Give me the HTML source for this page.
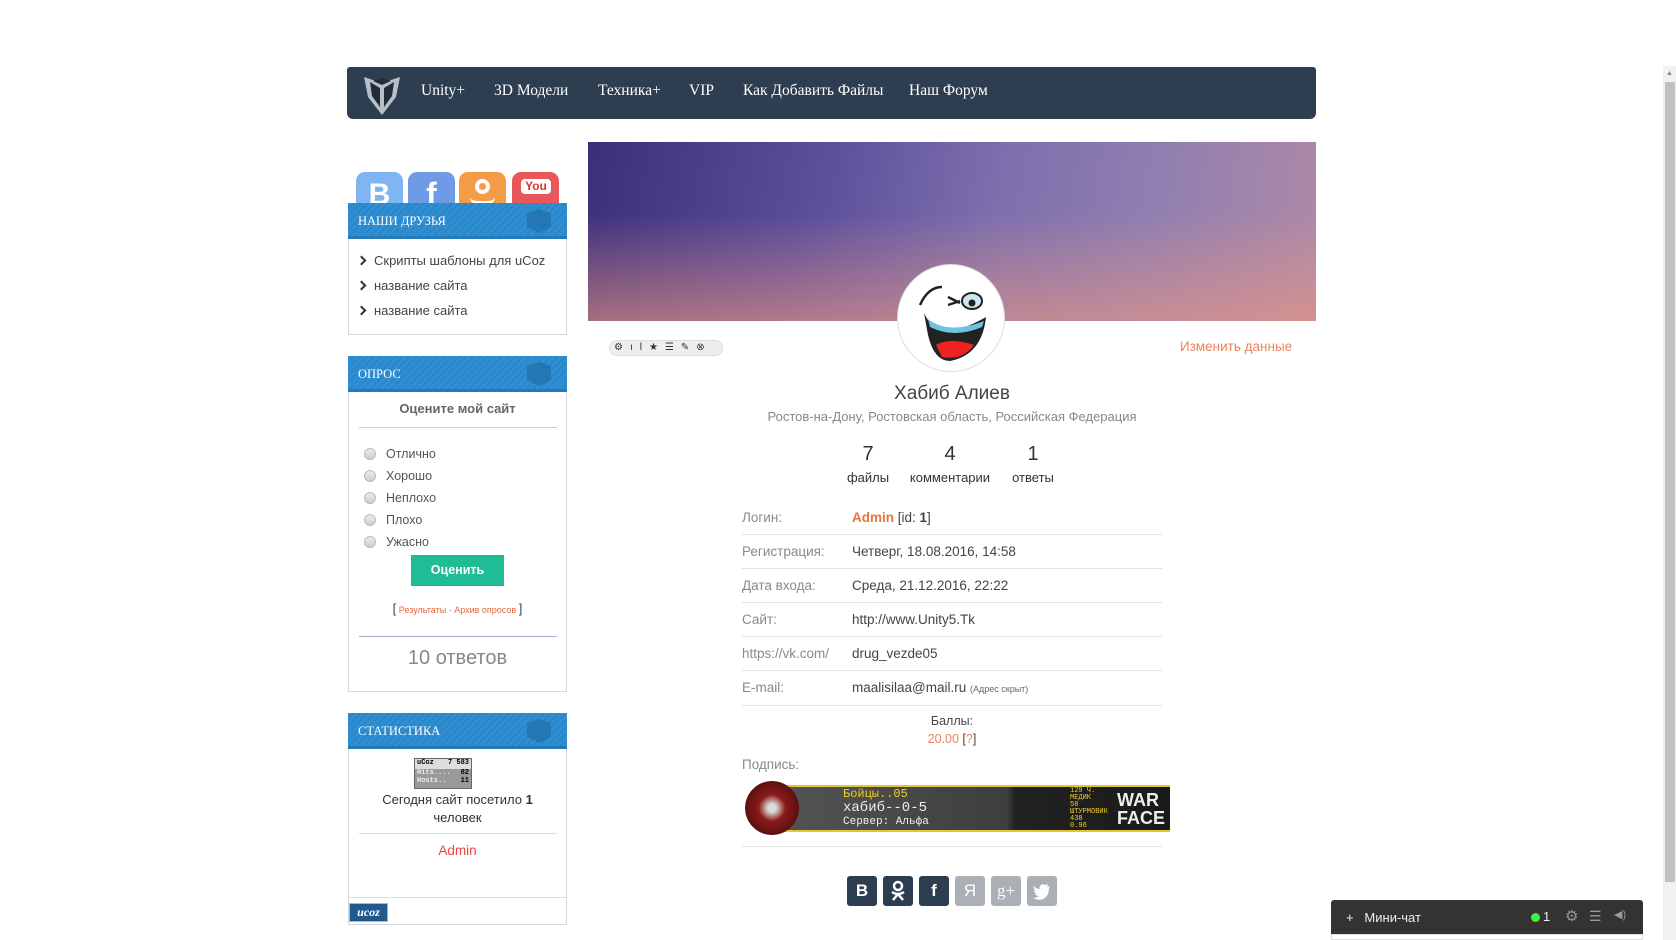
<!DOCTYPE html>
<html><head><meta charset="utf-8">
<style>
*{box-sizing:border-box;margin:0;padding:0}
body{width:1676px;height:940px;overflow:hidden;background:#fff;font-family:"Liberation Sans",sans-serif;color:#444;position:relative}
.abs{position:absolute}
.nav{left:347px;top:67px;width:969px;height:52px;background:#2c3e50;border-radius:3px 3px 6px 6px}
.nav a{position:absolute;top:15px;color:#fff;font-family:"Liberation Serif",serif;font-size:15.5px;text-decoration:none;white-space:nowrap}
.box{position:absolute;left:348px;width:219px;border:1px solid #d5d9de;background:#fff}
.hdr{position:absolute;left:348px;width:219px;height:36px;background:repeating-linear-gradient(135deg,#2e8fd3 0 3px,#2a86c8 3px 5px);border-bottom:3px solid #227ab9;color:#fff;font-family:"Liberation Serif",serif;font-size:12.5px;padding:11px 10px}
.cube{position:absolute;right:14px;top:4px;width:28px;height:28px}
.li{position:absolute;left:358px;font-size:13px;color:#444}
.li b{display:inline-block;width:7px;height:7px;border-right:2px solid #333;border-top:2px solid #333;transform:rotate(45deg);margin-right:9px;position:relative;top:-1px}
.rad{position:absolute;left:364px;font-size:12.5px;color:#555}
.rad i{display:inline-block;width:12px;height:12px;border-radius:50%;border:1px solid #bbb;background:linear-gradient(#eee,#ccc);margin-right:10px;vertical-align:-2px}
.lbl{position:absolute;left:742px;font-size:13.5px;color:#8a8a8a}
.val{position:absolute;left:852px;font-size:13.5px;color:#444}
.hl{position:absolute;left:742px;width:420px;height:1px;background:#e3e3e3}
.sh{position:absolute;top:876px;width:30px;height:30px;border-radius:3px;color:#fff;font-weight:bold;font-size:17px;text-align:center;line-height:30px}
</style></head><body>

<div class="abs nav">
<svg class="abs" style="left:15px;top:6px" width="40" height="44" viewBox="0 0 40 44"><path d="M2 4 L20 10 L38 4 L34 24 L20 42 L6 24 Z" fill="#b8bec4"/><path d="M8 9 L18 15 L18 34 L10 23 Z M32 9 L22 15 L22 34 L30 23 Z M11 8 L20 12 L29 8 L20 5Z" fill="#1f2d3a"/></svg>
<a style="left:74px">Unity+</a><a style="left:147px">3D Модели</a><a style="left:251px">Техника+</a><a style="left:342px">VIP</a><a style="left:396px">Как Добавить Файлы</a><a style="left:562px">Наш Форум</a>
</div>

<div class="abs" style="left:356px;top:172px;width:47px;height:35px;background:#7fb5f0;border-radius:9px 9px 0 0;color:#fff;font:bold 30px 'Liberation Sans';text-align:center;padding-top:6px;overflow:hidden">B</div>
<div class="abs" style="left:408px;top:172px;width:47px;height:35px;background:#6e9ae6;border-radius:9px 9px 0 0;color:#fff;font:bold 32px 'Liberation Sans';text-align:center;padding-top:4px;overflow:hidden">f</div>
<div class="abs" style="left:459px;top:172px;width:47px;height:35px;background:#f59a45;border-radius:9px 9px 0 0;overflow:hidden"><div class="abs" style="left:16px;top:7px;width:15px;height:15px;border:4px solid #fff;border-radius:50%"></div><div class="abs" style="left:11px;top:25px;width:25px;height:8px;border-bottom:4px solid #fff;border-radius:0 0 12px 12px"></div></div>
<div class="abs" style="left:512px;top:172px;width:47px;height:35px;background:#e8585b;border-radius:9px 9px 0 0;overflow:hidden"><div class="abs" style="left:9px;top:7px;width:30px;height:15px;background:#fff;border-radius:4px;color:#d33;font:bold 12px 'Liberation Sans';text-align:center;line-height:15px">You</div></div>

<div class="hdr" style="top:203px">НАШИ ДРУЗЬЯ<svg class="cube" viewBox="0 0 28 28"><path d="M2 6 L14 2 L26 6 L26 20 L14 26 L2 20Z" fill="#1f6fa8" opacity=".7"/></svg></div>
<div class="box" style="top:239px;height:96px;border-top:0"></div>
<div class="li" style="top:253px"><b></b>Скрипты шаблоны для uCoz</div>
<div class="li" style="top:278px"><b></b>название сайта</div>
<div class="li" style="top:303px"><b></b>название сайта</div>

<div class="hdr" style="top:356px">ОПРОС<svg class="cube" viewBox="0 0 28 28"><path d="M2 6 L14 2 L26 6 L26 20 L14 26 L2 20Z" fill="#1f6fa8" opacity=".7"/></svg></div>
<div class="box" style="top:392px;height:300px;border-top:0"></div>
<div class="abs" style="left:348px;width:219px;top:401px;text-align:center;font-weight:bold;font-size:13px;color:#666">Оцените мой сайт</div>
<div class="abs" style="left:359px;top:427px;width:198px;height:1px;background:#ccd"></div>
<div class="rad" style="top:447px"><i></i>Отлично</div>
<div class="rad" style="top:469px"><i></i>Хорошо</div>
<div class="rad" style="top:491px"><i></i>Неплохо</div>
<div class="rad" style="top:513px"><i></i>Плохо</div>
<div class="rad" style="top:535px"><i></i>Ужасно</div>
<div class="abs" style="left:411px;top:555px;width:93px;height:31px;background:#1fbc96;color:#fff;font-weight:bold;font-size:12.5px;text-align:center;line-height:31px">Оценить</div>
<div class="abs" style="left:348px;width:219px;top:601px;text-align:center;font-size:9px;color:#e8643c"><span style="color:#444;font-size:13px">[</span> Результаты <span style="color:#444">·</span> Архив опросов <span style="color:#444;font-size:13px">]</span></div>
<div class="abs" style="left:359px;top:636px;width:198px;height:1px;background:#aac"></div>
<div class="abs" style="left:348px;width:219px;top:647px;text-align:center;font-size:20px;color:#888">10 ответов</div>

<div class="hdr" style="top:713px">СТАТИСТИКА<svg class="cube" viewBox="0 0 28 28"><path d="M2 6 L14 2 L26 6 L26 20 L14 26 L2 20Z" fill="#1f6fa8" opacity=".7"/></svg></div>
<div class="box" style="top:749px;height:176px;border-top:0"></div>
<div class="abs" style="left:414px;top:758px;width:58px;height:31px;background:#999;border:1px solid #666;font:bold 7px 'Liberation Mono',monospace;color:#000">
<div style="background:#ddd;height:10px;padding:0 2px;display:flex;justify-content:space-between"><span>uCoz</span><span>7 583</span></div>
<div style="padding:0 2px;display:flex;justify-content:space-between;color:#eee"><span>Hits....</span><span style="color:#000">82</span></div>
<div style="padding:0 2px;display:flex;justify-content:space-between;color:#eee"><span>Hosts..</span><span style="color:#000">11</span></div></div>
<div class="abs" style="left:358px;width:199px;top:791px;text-align:center;font-size:13px;line-height:18px;color:#333">Сегодня сайт посетило <b>1</b><br>человек</div>
<div class="abs" style="left:359px;top:833px;width:198px;height:1px;background:#ddd"></div>
<div class="abs" style="left:348px;width:219px;top:843px;text-align:center;font-size:13.5px;color:#e44">Admin</div>
<div class="abs" style="left:349px;top:897px;width:217px;height:1px;background:#ddd"></div>
<div class="abs" style="left:349px;top:903px;width:39px;height:19px;background:#1e5a8c;border:1px solid #9bd;color:#fff;font:italic bold 12px 'Liberation Serif',serif;text-align:center;line-height:17px">ucoz</div>

<div class="abs" style="left:588px;top:142px;width:728px;height:179px;background:linear-gradient(180deg,rgba(0,0,0,0) 40%,rgba(235,150,130,.6) 100%),linear-gradient(100deg,#3b2f7a 0%,#5a4d9a 30%,#7d6fad 55%,#8f7eb0 75%,#b08aa6 100%)"></div>
<div class="abs" style="left:897px;top:264px;width:108px;height:108px;border-radius:50%;background:#fff;border:1px solid #ddd;overflow:hidden">
<svg width="108" height="108" viewBox="0 0 108 108"><path d="M22 40 Q30 22 44 22" stroke="#222" stroke-width="2.5" fill="none"/><path d="M50 32 l12 6 M50 40 l12 -4" stroke="#222" stroke-width="2.5"/><ellipse cx="74" cy="36" rx="10" ry="8" fill="#cfe6f2" stroke="#222" stroke-width="2"/><circle cx="74" cy="38" r="3.5" fill="#222"/><path d="M26 48 Q40 80 88 52 Q84 90 52 96 Q36 96 30 70Z" fill="#222"/><path d="M38 80 Q52 72 76 80 Q64 96 44 92Z" fill="#e22"/><path d="M30 54 Q50 70 86 56 L84 62 Q56 74 32 62Z" fill="#6cc4e0"/></svg></div>
<div class="abs" style="left:609px;top:340px;width:114px;height:16px;background:#eee;border-radius:8px;border:1px solid #ddd;font-size:10px;color:#333;letter-spacing:7px;padding-left:4px;line-height:14px">⚙ıl★☰✎⊗</div>
<div class="abs" style="left:1180px;top:339px;font-size:13.5px;color:#e8835a">Изменить данные</div>

<div class="abs" style="left:588px;width:728px;top:383px;text-align:center;font-size:19px;color:#444">Хабиб Алиев</div>
<div class="abs" style="left:588px;width:728px;top:409px;text-align:center;font-size:13px;color:#888">Ростов-на-Дону, Ростовская область, Российская Федерация</div>
<div class="abs" style="left:840px;width:56px;top:443px;text-align:center;font-size:20px;color:#333">7</div>
<div class="abs" style="left:840px;width:56px;top:470px;text-align:center;font-size:13px;color:#333">файлы</div>
<div class="abs" style="left:900px;width:100px;top:443px;text-align:center;font-size:20px;color:#333">4</div>
<div class="abs" style="left:900px;width:100px;top:470px;text-align:center;font-size:13px;color:#333">комментарии</div>
<div class="abs" style="left:1008px;width:50px;top:443px;text-align:center;font-size:20px;color:#333">1</div>
<div class="abs" style="left:1008px;width:50px;top:470px;text-align:center;font-size:13px;color:#333">ответы</div>

<div class="lbl" style="top:510px">Логин:</div><div class="val" style="top:510px"><b style="color:#e8743c">Admin</b> [id: <b>1</b>]</div>
<div class="hl" style="top:534px"></div>
<div class="lbl" style="top:544px">Регистрация:</div><div class="val" style="top:544px">Четверг, 18.08.2016, 14:58</div>
<div class="hl" style="top:568px"></div>
<div class="lbl" style="top:578px">Дата входа:</div><div class="val" style="top:578px">Среда, 21.12.2016, 22:22</div>
<div class="hl" style="top:602px"></div>
<div class="lbl" style="top:612px">Сайт:</div><div class="val" style="top:612px">http://www.Unity5.Tk</div>
<div class="hl" style="top:636px"></div>
<div class="lbl" style="top:646px">https://vk.com/</div><div class="val" style="top:646px">drug_vezde05</div>
<div class="hl" style="top:670px"></div>
<div class="lbl" style="top:680px">E-mail:</div><div class="val" style="top:680px">maalisilaa@mail.ru <span style="font-size:9px;color:#666">(Адрес скрыт)</span></div>
<div class="hl" style="top:705px"></div>
<div class="abs" style="left:742px;width:420px;top:714px;text-align:center;font-size:12.5px;color:#444">Баллы:</div>
<div class="abs" style="left:742px;width:420px;top:732px;text-align:center;font-size:12.5px;color:#e8835a">20.00 <span style="color:#444">[<span style="color:#e8835a">?</span>]</span></div>
<div class="abs" style="left:742px;top:757px;font-size:13.5px;color:#888">Подпись:</div>
<div class="abs" style="left:762px;top:785px;width:408px;height:47px;background:linear-gradient(90deg,#555 0%,#3e3e3e 60%,#222 62%,#1a1a1a 100%);border-top:2px solid #e6c630;border-bottom:2px solid #e6c630"></div>
<div class="abs" style="left:745px;top:781px;width:54px;height:54px;border-radius:50%;background:radial-gradient(#ddd 10%,#8b1a1a 35%,#5a1010 70%,transparent 72%)"></div>
<div class="abs" style="left:843px;top:787px;font:12px 'Liberation Mono',monospace;color:#f0d020">Бойцы..05</div>
<div class="abs" style="left:843px;top:800px;font:14px 'Liberation Mono',monospace;color:#eee">хабиб--0-5</div>
<div class="abs" style="left:843px;top:816px;font:11px 'Liberation Mono',monospace;color:#eee">Сервер: Альфа</div>
<div class="abs" style="left:1070px;top:788px;font:7px 'Liberation Mono',monospace;color:#f0d020;line-height:7px">129 Ч.<br>МЕДИК<br>58<br>ШТУРМОВИК<br>438<br>0.96</div>
<div class="abs" style="left:1117px;top:791px;font:bold 18px 'Liberation Sans';color:#eee;line-height:18px">WAR<br>FACE</div>
<div class="hl" style="top:846px"></div>

<div class="sh" style="left:847px;background:#2c3e50">B</div>
<div class="sh" style="left:883px;background:#2c3e50"><svg width="30" height="30" viewBox="0 0 30 30"><circle cx="15" cy="10" r="4" fill="none" stroke="#fff" stroke-width="2.5"/><path d="M9 16 Q15 20 21 16 M15 18 L10 24 M15 18 L20 24" stroke="#fff" stroke-width="2.5" fill="none"/></svg></div>
<div class="sh" style="left:919px;background:#2c3e50">f</div>
<div class="sh" style="left:955px;background:#aab0b6;font-weight:normal">Я</div>
<div class="sh" style="left:991px;background:#aab0b6;font-weight:normal;font-family:'Liberation Serif'">g+</div>
<div class="sh" style="left:1027px;background:#aab0b6"><svg width="30" height="30" viewBox="0 0 30 30"><path d="M23 10 Q21 11 20 11 Q21 9 21 8 Q19 9 18 9 Q15 7 13 10 Q12 12 13 13 Q9 13 7 10 Q6 13 9 15 Q8 15 7 14 Q7 17 10 18 Q9 18 8 18 Q9 20 12 20 Q9 22 6 22 Q16 27 21 18 Q22 15 22 12 Z" fill="#fff"/></svg></div>

<div class="abs" style="left:1331px;top:900px;width:312px;height:34px;background:#333;border-radius:3px 3px 0 0;color:#eee;font-size:13px;padding:10px 15px">+&nbsp;&nbsp; Мини-чат
<span class="abs" style="left:200px;top:13px;width:9px;height:9px;border-radius:50%;background:#4e4"></span>
<span class="abs" style="left:212px;top:9px">1</span>
<span class="abs" style="left:234px;top:7px;color:#999;font-size:15px">⚙</span>
<span class="abs" style="left:258px;top:8px;color:#999;font-size:14px">☰</span>
<span class="abs" style="left:283px;top:8px;color:#999;font-size:11px">◀)</span></div>
<div class="abs" style="left:1331px;top:934px;width:312px;height:6px;background:#fff;border:1px solid #ddd"></div>

<div class="abs" style="left:1663px;top:66px;width:13px;height:874px;background:#f1f1f1"></div>
<div class="abs" style="left:1665px;top:82px;width:10px;height:800px;background:#c1c1c1"></div>
<div class="abs" style="left:1666px;top:70px;font-size:7px;color:#888">▲</div>
</body></html>
